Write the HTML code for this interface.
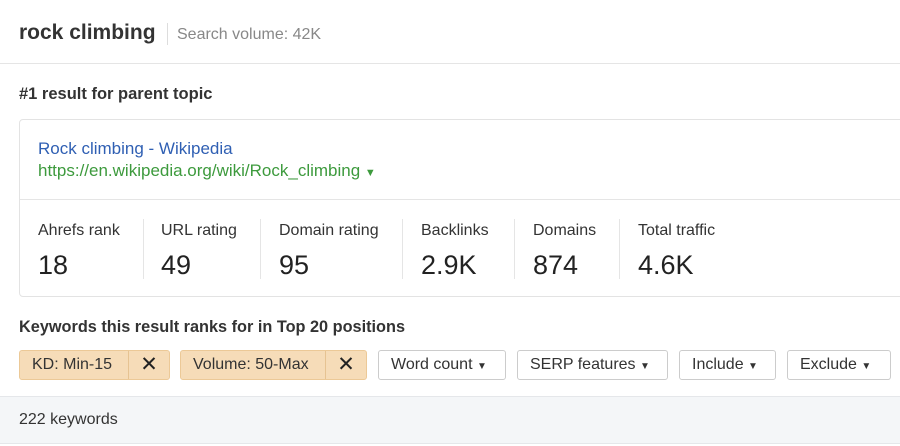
<!DOCTYPE html><html><head><style>
body{margin:0;width:900px;height:446px;background:#fff;font-family:"Liberation Sans",sans-serif;position:relative;overflow:hidden;color:#333}
.a{position:absolute;white-space:nowrap}
.btn{position:absolute;top:350px;height:30px;border:1px solid #ccc;border-radius:3px;box-sizing:border-box;font-size:16px;line-height:28px;color:#333;background:#fff}
.f{background:#f6dcb8;border-color:#ecc997}
.f .x{position:absolute;right:0;top:0;bottom:0;width:40px;border-left:1px solid #e6c392;text-align:center;font-size:21px;color:#222}
.lbl{font-size:16px;color:#333;top:222px}
.num{font-size:27px;color:#222;top:250px}
.vd{position:absolute;top:219px;height:60px;border-left:1px solid #e5e5e5}
</style></head><body>
<div class="a" style="left:19px;top:21px;font-size:21px;font-weight:bold;color:#333">rock climbing</div>
<div style="position:absolute;left:167px;top:23px;height:22px;border-left:1px solid #ddd"></div>
<div class="a" style="left:177px;top:26px;font-size:16px;color:#888">Search volume: 42K</div>
<div style="position:absolute;left:0;right:0;top:63px;border-top:1px solid #e5e5e5"></div>
<div class="a" style="left:19px;top:85px;font-size:16.5px;font-weight:bold;color:#333">#1 result for parent topic</div>
<div style="position:absolute;left:19px;top:119px;width:900px;height:178px;border:1px solid #e3e3e3;border-radius:4px;box-sizing:border-box"></div>
<div class="a" style="left:38px;top:139px;font-size:17px;color:#2f5fb3">Rock climbing - Wikipedia</div>
<div class="a" style="left:38px;top:161px;font-size:17px;color:#3d9a3d">https://en.wikipedia.org/wiki/Rock_climbing <span style="font-size:11px">▼</span></div>
<div style="position:absolute;left:20px;right:0;top:199px;border-top:1px solid #e5e5e5"></div>
<div class="a lbl" style="left:38px">Ahrefs rank</div><div class="a num" style="left:38px">18</div>
<div class="vd" style="left:143px"></div>
<div class="a lbl" style="left:161px">URL rating</div><div class="a num" style="left:161px">49</div>
<div class="vd" style="left:260px"></div>
<div class="a lbl" style="left:279px">Domain rating</div><div class="a num" style="left:279px">95</div>
<div class="vd" style="left:402px"></div>
<div class="a lbl" style="left:421px">Backlinks</div><div class="a num" style="left:421px">2.9K</div>
<div class="vd" style="left:514px"></div>
<div class="a lbl" style="left:533px">Domains</div><div class="a num" style="left:533px">874</div>
<div class="vd" style="left:619px"></div>
<div class="a lbl" style="left:638px">Total traffic</div><div class="a num" style="left:638px">4.6K</div>
<div class="a" style="left:19px;top:318px;font-size:16.3px;font-weight:bold;color:#333">Keywords this result ranks for in Top 20 positions</div>
<div class="btn f" style="left:19px;width:151px"><span style="padding-left:12px">KD: Min-15</span><span class="x">✕</span></div>
<div class="btn f" style="left:180px;width:187px"><span style="padding-left:12px">Volume: 50-Max</span><span class="x">✕</span></div>
<div class="btn" style="left:378px;width:128px;padding-left:12px">Word count <span style="font-size:10px">▼</span></div>
<div class="btn" style="left:517px;width:151px;padding-left:12px">SERP features <span style="font-size:10px">▼</span></div>
<div class="btn" style="left:679px;width:97px;padding-left:12px">Include <span style="font-size:10px">▼</span></div>
<div class="btn" style="left:787px;width:104px;padding-left:12px">Exclude <span style="font-size:10px">▼</span></div>
<div style="position:absolute;left:0;right:0;top:396px;height:46px;background:#f4f6f8;border-top:1px solid #e5e7ea;border-bottom:1px solid #e5e7ea"></div>
<div class="a" style="left:19px;top:411px;font-size:16px;color:#333">222 keywords</div>
</body></html>
